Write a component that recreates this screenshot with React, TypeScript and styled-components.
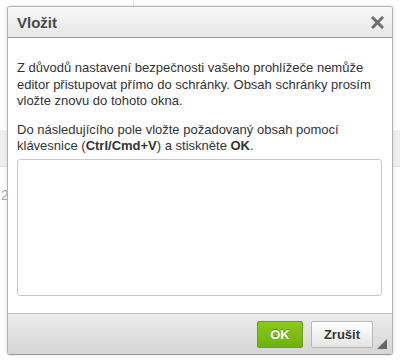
import React, { FC } from 'react';
import styled, { createGlobalStyle } from 'styled-components';

const GlobalStyle = createGlobalStyle`
  html, body {
    margin: 0;
    padding: 0;
    background: #fff;
  }
  body {
    font-family: Arial, 'Liberation Sans', Helvetica, sans-serif;
    width: 400px;
    height: 361px;
    overflow: hidden;
  }
`;

const Page = styled.div`
  position: relative;
  width: 400px;
  height: 361px;
  background: #fff;
`;

const Backdrop = styled.div`
  display: flex;
  flex-direction: column;
  height: 100%;
`;

const TopStrip = styled.div`
  height: 130px;
  display: flex;
`;

const TopCell = styled.div`
  width: 133px;
  border-right: 1px solid #e4e4e4;
`;

const Band = styled.div`
  height: 36px;
  background: #eeeeee;
  border-bottom: 1px solid #dcdcdc;
`;

const PageNumber = styled.div`
  margin-top: 20px;
  padding-left: 1px;
  font-size: 14px;
  color: #a4adb8;
`;

const Dialog = styled.div`
  position: absolute;
  left: 7px;
  top: 6px;
  width: 386px;
  height: 349px;
  display: flex;
  flex-direction: column;
  background: #fff;
  border: 1px solid #b2b2b2;
  border-bottom-color: #999;
  border-radius: 3px;
  box-shadow: 0 0 3px rgba(0, 0, 0, 0.15);
  box-sizing: border-box;
  overflow: hidden;
`;

const Title = styled.div`
  height: 30px;
  flex: none;
  display: flex;
  align-items: center;
  justify-content: space-between;
  padding: 0 7px 0 9px;
  background: linear-gradient(to bottom, #f8f8f8, #e6e6e6);
  border-bottom: 1px solid #999;
  box-shadow: 0 1px 0 #fff inset;
  font-size: 15px;
  font-weight: bold;
  color: #474747;
  text-shadow: 0 1px 0 rgba(255, 255, 255, 0.75);
`;

const Close = styled.span`
  display: flex;
  align-items: center;
  justify-content: center;
  width: 16px;
  height: 16px;
`;

const Body = styled.div`
  flex: 1;
  display: flex;
  flex-direction: column;
  padding: 22px 10px 0 9px;
  font-size: 13px;
  line-height: 16.5px;
  color: #333;
`;

const Para = styled.p`
  margin: 0 0 12px;

  &:last-of-type {
    margin-bottom: 4px;
  }
`;

const Area = styled.div`
  height: 137px;
  border: 1px solid #c6c8cc;
  border-radius: 3px;
  box-sizing: border-box;
`;

const Footer = styled.div`
  height: 40px;
  flex: none;
  display: flex;
  align-items: center;
  justify-content: flex-end;
  gap: 8px;
  padding: 0 19px 0 0;
  position: relative;
  background: linear-gradient(to bottom, #ebebeb, #d6d6d6);
  border-top: 1px solid #bfbfbf;
`;

const Button = styled.button<{ $primary?: boolean }>`
  height: 27px;
  padding: 0 12px;
  font-family: inherit;
  font-size: 13px;
  font-weight: bold;
  border-radius: 2px;
  cursor: pointer;
  box-sizing: border-box;
  color: ${(p) => (p.$primary ? '#fff' : '#333')};
  border: 1px solid ${(p) => (p.$primary ? '#6aa012' : '#b6b6b6')};
  background: ${(p) =>
    p.$primary
      ? 'linear-gradient(to bottom, #8ccb1a, #6eb00f)'
      : 'linear-gradient(to bottom, #ffffff, #e4e4e4)'};
  text-shadow: ${(p) => (p.$primary ? '0 -1px 0 #55830c' : '0 1px 0 #fff')};
  min-width: ${(p) => (p.$primary ? '46px' : '58px')};
`;

const Resizer = styled.span`
  position: absolute;
  right: 5px;
  bottom: 5px;
  width: 0;
  height: 0;
  border-style: solid;
  border-width: 0 0 10px 10px;
  border-color: transparent transparent #666 transparent;
`;

const App: FC = () => {
  return (
    <Page>
      <GlobalStyle />
      <Backdrop>
        <TopStrip>
          <TopCell />
        </TopStrip>
        <Band />
        <PageNumber>2</PageNumber>
      </Backdrop>
      <Dialog>
        <Title>
          Vložit
          <Close>
            <svg width='13' height='13' viewBox='0 0 13 13'>
              <path d='M2 2 L11 11 M11 2 L2 11' stroke='#6f6f6f' strokeWidth='3' strokeLinecap='square' />
            </svg>
          </Close>
        </Title>
        <Body>
          <Para>
            Z důvodů nastavení bezpečnosti vašeho prohlížeče nemůže editor přistupovat přímo do schránky.
            Obsah schránky prosím vložte znovu do tohoto okna.
          </Para>
          <Para>
            Do následujícího pole vložte požadovaný obsah pomocí klávesnice (<b>Ctrl/Cmd+V</b>) a
            stiskněte <b>OK</b>.
          </Para>
          <Area />
        </Body>
        <Footer>
          <Button $primary>OK</Button>
          <Button>Zrušit</Button>
          <Resizer />
        </Footer>
      </Dialog>
    </Page>
  );
};

export default App;
